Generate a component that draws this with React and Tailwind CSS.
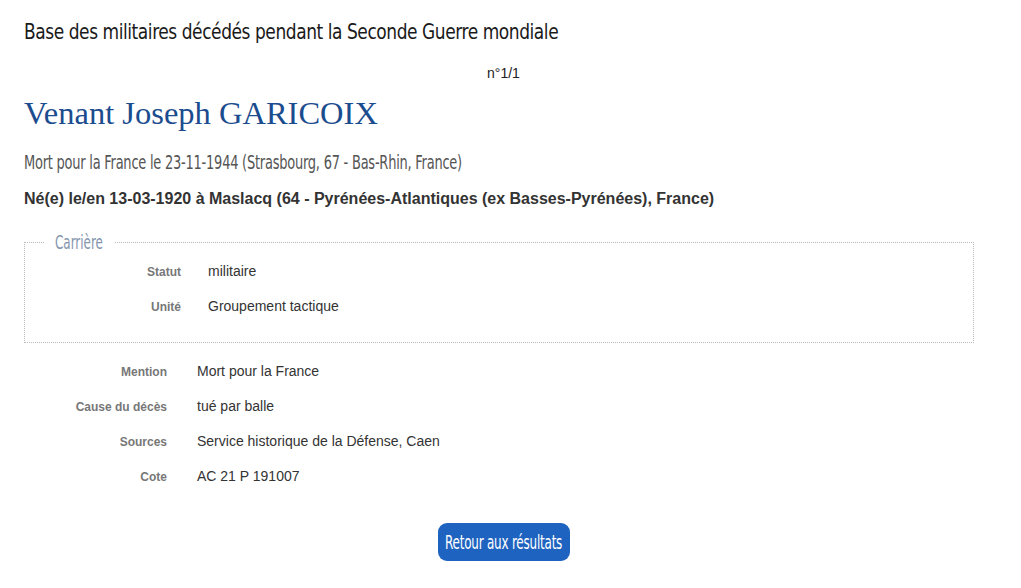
import React from 'react';

const cond = { fontFamily: '"DejaVu Sans Condensed", "DejaVu Sans", sans-serif', fontStretch: 'condensed' };

const Row = ({ label, value, labelW, gap }) => (
    <div className="flex items-baseline h-[35px]">
        <div className={`${labelW} text-right text-[12px] font-bold text-[#777]`}>{label}</div>
        <div className={`${gap} text-[14px] text-[#333]`}>{value}</div>
    </div>
);

export default function App() {
    return (
        <div className="bg-white w-[1021px] h-[588px] px-[24px] pt-[18px] text-[#333]" style={{ fontFamily: '"Liberation Sans", Arial, sans-serif' }}>
            <h1 className="text-[22px] leading-[28px] text-[#1a1a1a] whitespace-nowrap" style={cond}>
                <span className="inline-block origin-left scale-x-[0.86] tracking-[-0.5px]">
                    Base des militaires décédés pendant la Seconde Guerre mondiale
                </span>
            </h1>
            <div className="mt-[19px] text-center text-[14px] leading-[16px] pr-[14px] text-[#222]">n°1/1</div>

            <h2 className="mt-[13px] text-[32.5px] leading-[38px] text-[#1b4c8e]" style={{ fontFamily: '"Liberation Serif", Georgia, serif' }}>
                Venant Joseph GARICOIX
            </h2>
            <p className="mt-[18px] text-[19px] leading-[24px] text-[#555] whitespace-nowrap" style={cond}>
                <span className="inline-block origin-left scale-x-[0.76] tracking-[-0.3px]">
                    Mort pour la France le 23-11-1944 (Strasbourg, 67 - Bas-Rhin, France)
                </span>
            </p>
            <p className="mt-[15px] text-[16px] leading-[20px] font-bold text-[#333]">
                Né(e) le/en 13-03-1920 à Maslacq (64 - Pyrénées-Atlantiques (ex Basses-Pyrénées), France)
            </p>

            <fieldset className="mt-[22px] w-[950px] border border-dotted border-[#bbb] pt-[8px] pb-[11px]">
                <legend className="ml-[20px] px-[10px] text-[19px] leading-[22px] text-[#8496ad] whitespace-nowrap" style={cond}>
                    <span className="inline-block origin-left scale-x-[0.70] -mr-[20px]">Carrière</span>
                </legend>
                <Row label="Statut" value="militaire" labelW="w-[156px]" gap="pl-[27px]" />
                <Row label="Unité" value="Groupement tactique" labelW="w-[156px]" gap="pl-[27px]" />
            </fieldset>

            <div className="mt-[18px] w-[950px]">
                <Row label="Mention" value="Mort pour la France" labelW="w-[143px]" gap="pl-[30px]" />
                <Row label="Cause du décès" value="tué par balle" labelW="w-[143px]" gap="pl-[30px]" />
                <Row label="Sources" value="Service historique de la Défense, Caen" labelW="w-[143px]" gap="pl-[30px]" />
                <Row label="Cote" value="AC 21 P 191007" labelW="w-[143px]" gap="pl-[30px]" />
            </div>

            <div className="mt-[22px] flex justify-center pr-[14px]">
                <button className="h-[38px] w-[132px] flex items-center justify-center rounded-[9px] bg-[#1e63c0] text-white text-[19px] whitespace-nowrap" style={cond}>
                    <span className="inline-block shrink-0 scale-x-[0.70] tracking-[-0.3px]">Retour aux résultats</span>
                </button>
            </div>
        </div>
    );
}
